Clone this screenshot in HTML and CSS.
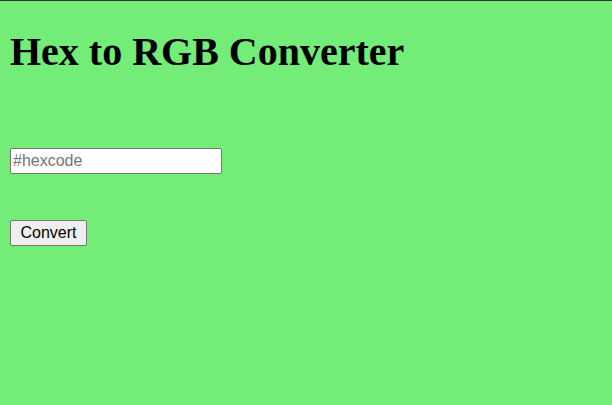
FILE: index.html
```html
<!DOCTYPE html>
<html>
<head>
<meta charset="utf-8">
<link rel="stylesheet" href="styles.css">
</head>
<body class="page">
<h1 class="title">Hex to RGB Converter</h1>
<div class="row row-input"><input class="hex" type="text" placeholder="#hexcode"></div>
<div class="row row-button"><button class="convert">Convert</button></div>
</body>
</html>
```
FILE: styles.css
```css
html { background: #73ed78; }
.page {
  margin: 0;
  padding: 8px 10px;
  border-top: 1px solid #333;
  background: #73ed78;
  min-height: 396px;
  box-sizing: border-box;
  font-family: "Liberation Serif", serif;
}
.title {
  font-family: "Liberation Serif", serif;
  font-size: 40px;
  font-weight: bold;
  margin: 20px 0 0 0;
  line-height: 46px;
}
.row { display: block; }
.row-input { margin-top: 73px; }
.row-button { margin-top: 46px; }
.hex {
  font-family: "Liberation Sans", Arial, sans-serif;
  font-size: 16px;
  width: 212px;
  height: 26px;
  box-sizing: border-box;
  padding: 1px 2px;
  border: 1px solid #767676;
  border-radius: 2px;
  margin: 0;
}
.hex::placeholder { color: #757575; }
.convert {
  font-family: "Liberation Sans", Arial, sans-serif;
  font-size: 16px;
  height: 26px;
  width: 77px;
  padding: 1px 6px;
  margin: 0;
  border: 1px solid #767676;
  border-radius: 2px;
  background: #efefef;
  color: #000;
}
```
